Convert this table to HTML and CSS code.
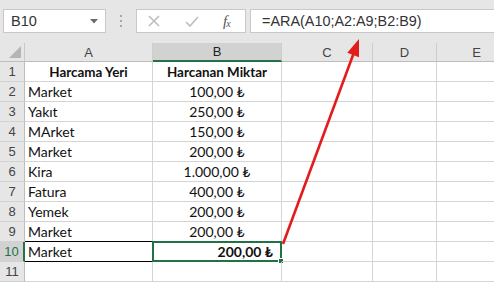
FILE: index.html
```html
<!DOCTYPE html>
<html lang="tr">
<head>
<meta charset="utf-8">
<link rel="stylesheet" href="styles.css">
</head>
<body>
<div class="page">
  <div class="toolbar">
    <div class="namebox">
      <span class="nb-text">B10</span>
      <svg class="nb-arrow" width="8" height="5" viewBox="0 0 8 5"><path d="M0 0H8L4 4.5Z" fill="#6b6b6b"/></svg>
    </div>
    <div class="grip"><i></i><i></i><i></i></div>
    <div class="buttons">
      <svg class="btn-x" width="12" height="12" viewBox="0 0 12 12"><path d="M1 1L11 11M11 1L1 11" stroke="#bdbdbd" stroke-width="1.6" fill="none"/></svg>
      <svg class="btn-ok" width="14" height="11" viewBox="0 0 14 11"><path d="M1 6L5 10L13 1" stroke="#bdbdbd" stroke-width="1.6" fill="none"/></svg>
      <span class="btn-fx">f<sub>x</sub></span>
    </div>
    <div class="formula">=ARA(A10;A2:A9;B2:B9)</div>
  </div>
  <div class="sheet">
    <div class="corner"><svg width="12" height="12" viewBox="0 0 12 12"><path d="M12 0V12H0Z" fill="#b4b4b4"/></svg></div>
    <div class="ch">A</div>
    <div class="ch sel">B</div>
    <div class="ch">C</div>
    <div class="ch">D</div>
    <div class="ch">E</div>

    <div class="rh">1</div><div class="c hd">Harcama Yeri</div><div class="c hd">Harcanan Miktar</div><div class="c"></div><div class="c"></div><div class="c"></div>
    <div class="rh">2</div><div class="c">Market</div><div class="c num">100,00 ₺</div><div class="c"></div><div class="c"></div><div class="c"></div>
    <div class="rh">3</div><div class="c">Yakıt</div><div class="c num">250,00 ₺</div><div class="c"></div><div class="c"></div><div class="c"></div>
    <div class="rh">4</div><div class="c">MArket</div><div class="c num">150,00 ₺</div><div class="c"></div><div class="c"></div><div class="c"></div>
    <div class="rh">5</div><div class="c">Market</div><div class="c num">200,00 ₺</div><div class="c"></div><div class="c"></div><div class="c"></div>
    <div class="rh">6</div><div class="c">Kira</div><div class="c num">1.000,00 ₺</div><div class="c"></div><div class="c"></div><div class="c"></div>
    <div class="rh">7</div><div class="c">Fatura</div><div class="c num">400,00 ₺</div><div class="c"></div><div class="c"></div><div class="c"></div>
    <div class="rh">8</div><div class="c">Yemek</div><div class="c num">200,00 ₺</div><div class="c"></div><div class="c"></div><div class="c"></div>
    <div class="rh">9</div><div class="c">Market</div><div class="c num">200,00 ₺</div><div class="c"></div><div class="c"></div><div class="c"></div>
    <div class="rh sel">10</div><div class="c boxed">Market</div><div class="c active">200,00 ₺<span class="handle"></span></div><div class="c"></div><div class="c"></div><div class="c"></div>
    <div class="rh">11</div><div class="c"></div><div class="c"></div><div class="c"></div><div class="c"></div><div class="c"></div>
  </div>
  <svg class="arrow" width="494" height="282" viewBox="0 0 494 282">
    <line x1="283" y1="244" x2="353.6" y2="53.5" stroke="#e41b1b" stroke-width="2.6"/>
    <path d="M359 39L359 57.2L347.3 52.8Z" fill="#e41b1b"/>
  </svg>
</div>
</body>
</html>
```
FILE: styles.css
```css
* { box-sizing: border-box; }
html, body { margin: 0; padding: 0; }
body {
  width: 494px;
  height: 282px;
  overflow: hidden;
  background: #ffffff;
  font-family: "Lato", "Noto Sans", "DejaVu Sans", sans-serif;
}
.page { position: relative; width: 494px; height: 282px; overflow: hidden; }

.toolbar {
  height: 44px;
  background: #e6e6e6;
  display: flex;
  align-items: flex-start;
  padding: 9px 0 0 3px;
  border-bottom: 1px solid #d8d8d8;
}
.namebox {
  width: 103px;
  height: 24px;
  background: #fff;
  border: 1px solid #c8c8c8;
  display: flex;
  align-items: center;
  justify-content: space-between;
  padding: 0 7px 0 7px;
}
.nb-text { font-family: "Liberation Sans", Arial, sans-serif; font-size: 14.5px; color: #333; }
.nb-arrow { margin-top: 1px; }
.grip {
  width: 30px;
  height: 24px;
  display: flex;
  flex-direction: column;
  align-items: center;
  justify-content: center;
  gap: 3px;
}
.grip i { display: block; width: 2px; height: 2px; background: #a8a8a8; }
.buttons {
  width: 110px;
  height: 24px;
  background: #fff;
  border: 1px solid #c8c8c8;
  display: flex;
  align-items: center;
  padding-left: 11px;
}
.btn-x { margin-right: 25px; }
.btn-ok { margin-right: 24px; }
.btn-fx {
  font-family: "Liberation Serif", serif;
  font-style: italic;
  font-size: 15px;
  color: #555;
  letter-spacing: -1px;
}
.btn-fx sub { font-size: 10px; vertical-align: -1px; }
.formula {
  flex: 1;
  margin-left: 4px;
  margin-right: -4px;
  height: 24px;
  background: #fff;
  border: 1px solid #c8c8c8;
  font-family: "Liberation Sans", Arial, sans-serif;
  font-size: 14.4px;
  line-height: 22px;
  color: #333;
  padding-left: 11px;
}

.sheet {
  display: grid;
  grid-template-columns: 25px 128px 129px 91px 64px 80px;
  grid-template-rows: 19px repeat(11, 20px);
  margin-top: -1px;
}
.corner {
  background: #e6e6e6;
  border-right: 1px solid #c9c9c9;
  border-bottom: 1px solid #bdbdbd;
  display: flex;
  align-items: flex-end;
  justify-content: flex-end;
  padding: 0 3px 3px 0;
}
.ch {
  background: #e6e6e6;
  border-right: 1px solid #cdcdcd;
  border-bottom: 1px solid #bdbdbd;
  font-family: "Liberation Sans", Arial, sans-serif;
  font-size: 13px;
  color: #444;
  display: flex;
  align-items: center;
  justify-content: center;
}
.ch.sel {
  background: #d2d2d2;
  border-bottom: 2px solid #217346;
  color: #222;
}
.rh {
  background: #e6e6e6;
  border-right: 1px solid #bdbdbd;
  border-bottom: 1px solid #d2d2d2;
  font-family: "Liberation Sans", Arial, sans-serif;
  font-size: 13px;
  color: #444;
  display: flex;
  align-items: center;
  justify-content: center;
}
.rh.sel {
  background: #d2d2d2;
  border-right: 2px solid #217346;
  color: #217346;
}
.c {
  border-right: 1px solid #d4d4d4;
  border-bottom: 1px solid #d4d4d4;
  font-size: 14px;
  color: #111;
  padding: 0 3px;
  display: flex;
  align-items: center;
  white-space: nowrap;
  position: relative;
}
.c.hd { font-weight: bold; font-size: 13.4px; justify-content: center; }
.c.num { justify-content: center; }
.c.boxed {
  border-top: 1px solid #000;
  border-bottom: 1px solid #000;
  margin-top: -1px;
}
.c.active {
  border: 2px solid #217346;
  margin-top: -1px;
  margin-left: -1px;
  justify-content: flex-end;
  padding-right: 7px;
  font-weight: bold;
}
.handle {
  position: absolute;
  right: -4px;
  bottom: -4px;
  width: 6px;
  height: 6px;
  background: #217346;
  border: 1px solid #fff;
}
.arrow { position: absolute; left: 0; top: 0; pointer-events: none; }
```
